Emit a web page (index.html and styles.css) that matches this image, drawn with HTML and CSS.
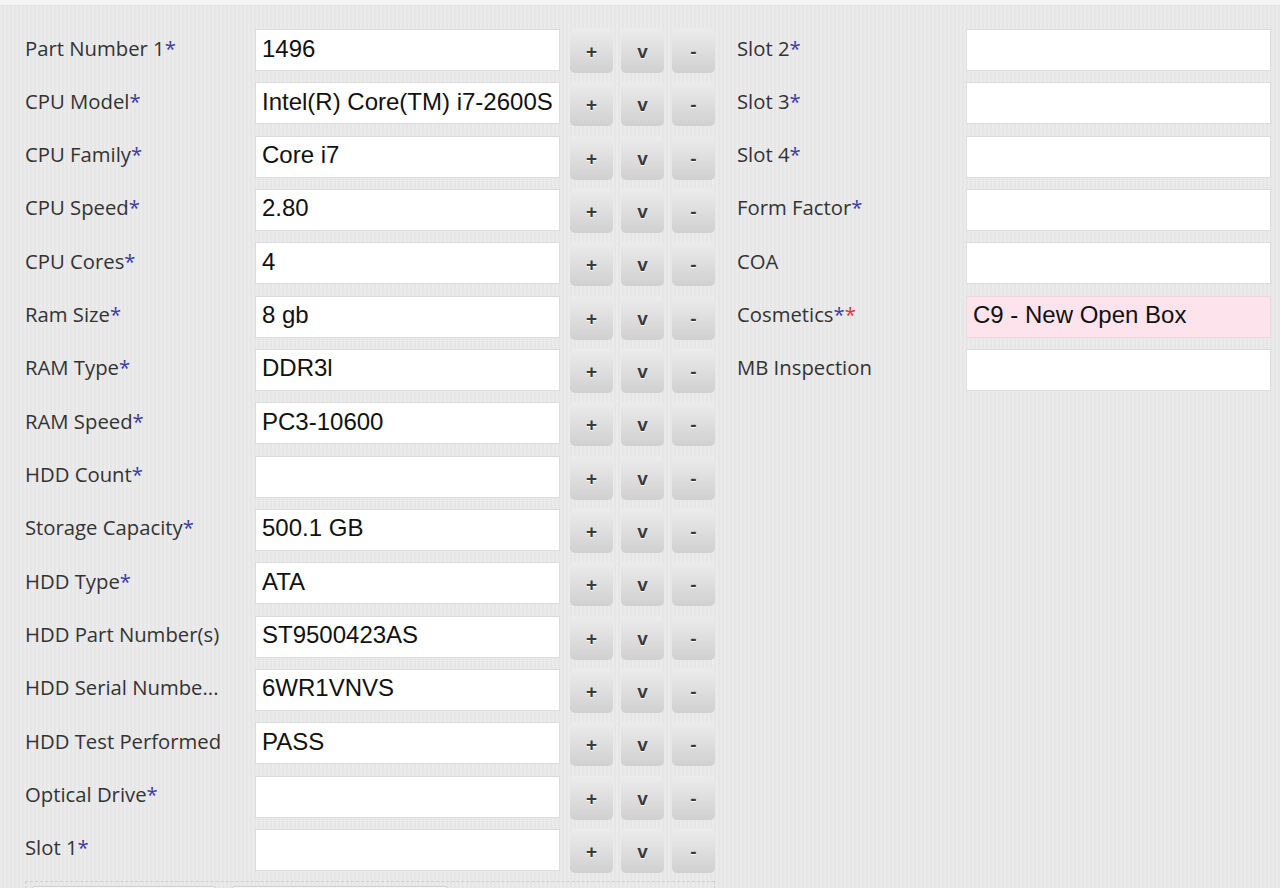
FILE: index.html
```html
<!DOCTYPE html>
<html lang="en">
<head>
    <meta charset="UTF-8">
    <title>Unit Specs</title>
    <link rel="stylesheet" href="styles.css">
</head>
<body>
    <div class="panel">
        <div class="columns">
            <div class="col col-left">
                <div class="row">
                    <label>Part Number 1<span class="req">*</span></label>
                    <input class="field" type="text" value="1496">
                    <div class="btns"><button class="btn">+</button><button class="btn">v</button><button class="btn">-</button></div>
                </div>
                <div class="row">
                    <label>CPU Model<span class="req">*</span></label>
                    <input class="field" type="text" value="Intel(R) Core(TM) i7-2600S CPU @ 2.80GHz">
                    <div class="btns"><button class="btn">+</button><button class="btn">v</button><button class="btn">-</button></div>
                </div>
                <div class="row">
                    <label>CPU Family<span class="req">*</span></label>
                    <input class="field" type="text" value="Core i7">
                    <div class="btns"><button class="btn">+</button><button class="btn">v</button><button class="btn">-</button></div>
                </div>
                <div class="row">
                    <label>CPU Speed<span class="req">*</span></label>
                    <input class="field" type="text" value="2.80">
                    <div class="btns"><button class="btn">+</button><button class="btn">v</button><button class="btn">-</button></div>
                </div>
                <div class="row">
                    <label>CPU Cores<span class="req">*</span></label>
                    <input class="field" type="text" value="4">
                    <div class="btns"><button class="btn">+</button><button class="btn">v</button><button class="btn">-</button></div>
                </div>
                <div class="row">
                    <label>Ram Size<span class="req">*</span></label>
                    <input class="field" type="text" value="8 gb">
                    <div class="btns"><button class="btn">+</button><button class="btn">v</button><button class="btn">-</button></div>
                </div>
                <div class="row">
                    <label>RAM Type<span class="req">*</span></label>
                    <input class="field" type="text" value="DDR3l">
                    <div class="btns"><button class="btn">+</button><button class="btn">v</button><button class="btn">-</button></div>
                </div>
                <div class="row">
                    <label>RAM Speed<span class="req">*</span></label>
                    <input class="field" type="text" value="PC3-10600">
                    <div class="btns"><button class="btn">+</button><button class="btn">v</button><button class="btn">-</button></div>
                </div>
                <div class="row">
                    <label>HDD Count<span class="req">*</span></label>
                    <input class="field" type="text" value="">
                    <div class="btns"><button class="btn">+</button><button class="btn">v</button><button class="btn">-</button></div>
                </div>
                <div class="row">
                    <label>Storage Capacity<span class="req">*</span></label>
                    <input class="field" type="text" value="500.1 GB">
                    <div class="btns"><button class="btn">+</button><button class="btn">v</button><button class="btn">-</button></div>
                </div>
                <div class="row">
                    <label>HDD Type<span class="req">*</span></label>
                    <input class="field" type="text" value="ATA">
                    <div class="btns"><button class="btn">+</button><button class="btn">v</button><button class="btn">-</button></div>
                </div>
                <div class="row">
                    <label>HDD Part Number(s)</label>
                    <input class="field" type="text" value="ST9500423AS">
                    <div class="btns"><button class="btn">+</button><button class="btn">v</button><button class="btn">-</button></div>
                </div>
                <div class="row">
                    <label>HDD Serial Numbe...</label>
                    <input class="field" type="text" value="6WR1VNVS">
                    <div class="btns"><button class="btn">+</button><button class="btn">v</button><button class="btn">-</button></div>
                </div>
                <div class="row">
                    <label>HDD Test Performed</label>
                    <input class="field" type="text" value="PASS">
                    <div class="btns"><button class="btn">+</button><button class="btn">v</button><button class="btn">-</button></div>
                </div>
                <div class="row">
                    <label>Optical Drive<span class="req">*</span></label>
                    <input class="field" type="text" value="">
                    <div class="btns"><button class="btn">+</button><button class="btn">v</button><button class="btn">-</button></div>
                </div>
                <div class="row">
                    <label>Slot 1<span class="req">*</span></label>
                    <input class="field" type="text" value="">
                    <div class="btns"><button class="btn">+</button><button class="btn">v</button><button class="btn">-</button></div>
                </div>
                <!-- form actions, below the fold -->
                <div class="actions">
                    <button class="action"></button>
                    <button class="action action-wide"></button>
                </div>
            </div>

            <div class="col col-right">
                <div class="row">
                    <label>Slot 2<span class="req">*</span></label>
                    <input class="field" type="text" value="">
                </div>
                <div class="row">
                    <label>Slot 3<span class="req">*</span></label>
                    <input class="field" type="text" value="">
                </div>
                <div class="row">
                    <label>Slot 4<span class="req">*</span></label>
                    <input class="field" type="text" value="">
                </div>
                <div class="row">
                    <label>Form Factor<span class="req">*</span></label>
                    <input class="field" type="text" value="">
                </div>
                <div class="row">
                    <label>COA</label>
                    <input class="field" type="text" value="">
                </div>
                <div class="row">
                    <label>Cosmetics<span class="req">*</span><span class="req req-red">*</span></label>
                    <input class="field field-flag" type="text" value="C9 - New Open Box">
                </div>
                <div class="row">
                    <label>MB Inspection</label>
                    <input class="field" type="text" value="">
                </div>
            </div>
        </div>
    </div>
</body>
</html>
```

FILE: styles.css
```css
body {
    margin: 0;
    background: #f4f4f4;
    font-family: "Open Sans", "Noto Sans", sans-serif;
    color: #333;
    overflow: hidden;
}
.panel {
    margin-top: 5px;
    padding: 23px 9px 0 25px;
    min-height: 900px;
    background: repeating-linear-gradient(90deg, #ebebeb 0, #ebebeb 2px, #e6e6e6 2px, #e6e6e6 4px);
    border-top: 1px solid #e2e2e2;
}
.columns {
    display: flex;
    gap: 22px;
}
.col {
    display: flex;
    flex-direction: column;
    gap: 11.33px;
}
.col-left {
    width: 690px;
}
.row {
    display: flex;
    align-items: center;
    height: 42px;
}
.row label {
    width: 230px;
    flex-shrink: 0;
    font-size: 20.3px;
    color: #333;
    margin-top: -5px;
    white-space: nowrap;
}
.col-right .row label {
    width: 229px;
}
.req {
    color: #3a3aa8;
}
.req-red {
    color: #e0303c;
}
.field {
    box-sizing: border-box;
    width: 305px;
    height: 42px;
    margin: 0;
    padding: 0 6px 3px;
    border: 1px solid #dcdcdc;
    background: #fff;
    font-family: "Liberation Sans", Arial, sans-serif;
    font-size: 24px;
    color: #111;
    outline: none;
}
.field-flag {
    background: #fde4ec;
    border-color: #f0d6de;
}
.btns {
    display: flex;
    gap: 8px;
    margin-left: 10px;
    margin-top: 2px;
}
.btn {
    width: 43px;
    height: 44px;
    padding: 2px 0 0;
    border: none;
    border-radius: 5px;
    background: linear-gradient(#ececec, #d0d0d0);
    font-family: "Liberation Sans", Arial, sans-serif;
    font-size: 19px;
    font-weight: bold;
    color: #3a3a3a;
    text-shadow: 0 1px 0 #fff;
    cursor: pointer;
}
.btn:hover {
    background: linear-gradient(#f2f2f2, #d8d8d8);
}
.actions {
    display: flex;
    gap: 14px;
    margin-top: -1px;
    padding: 4px 5px;
    border: 1px dashed #cfcfcf;
    height: 40px;
}
.action {
    width: 186px;
    height: 40px;
    border: 1px solid #cfcfcf;
    border-radius: 4px;
    background: linear-gradient(#fafafa, #e4e4e4);
}
.action-wide {
    width: 218px;
}
```
